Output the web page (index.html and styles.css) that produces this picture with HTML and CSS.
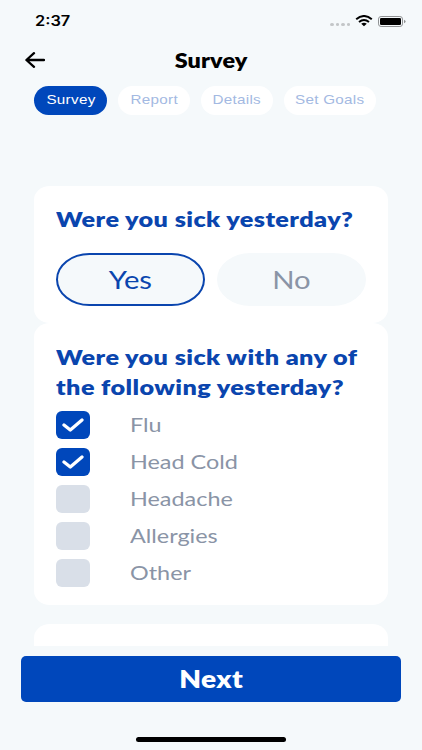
FILE: index.html
```
<!DOCTYPE html>
<html lang="en">
<head>
  <meta charset="utf-8">
  <title>Survey</title>
  <link rel="stylesheet" href="styles.css">
</head>
<body>

<div class="status-bar">
  <span class="time">2:37</span>
  <div class="status-icons">
    <div class="dots"><i></i><i></i><i></i><i></i></div>
    <svg class="wifi" width="18" height="12" viewBox="0 0 18 12">
      <path d="M1.2 4.2 Q9 -2.2 16.8 4.2" fill="none" stroke="#000" stroke-width="2"/>
      <path d="M4 7 Q9 2.8 14 7" fill="none" stroke="#000" stroke-width="1.9"/>
      <path d="M6.2 8.8 Q9 6.8 11.8 8.8 L9 11.2 Z"/>
    </svg>
    <svg class="battery" width="28" height="11" viewBox="0 0 28 11">
      <rect x="0.5" y="0.5" width="24" height="10" rx="2.6" fill="none" stroke="#8f9193"/>
      <rect x="2" y="2" width="21" height="7" rx="1.3"/>
      <path d="M26 3.8 Q27.6 4.4 27.6 5.5 Q27.6 6.6 26 7.2 Z" fill="#8f9193"/>
    </svg>
  </div>
</div>

<header class="header">
  <svg class="back" width="20" height="16" viewBox="0 0 20 16">
    <path d="M19 8 H1.6 M9 1.2 L1.4 8 L9 14.8" fill="none" stroke="#000" stroke-width="2.3" stroke-linejoin="round" stroke-linecap="round"/>
  </svg>
  <h1><span>Survey</span></h1>
</header>

<nav class="tabs">
  <a class="tab tab-survey active"><span>Survey</span></a>
  <a class="tab tab-report"><span>Report</span></a>
  <a class="tab tab-details"><span>Details</span></a>
  <a class="tab tab-goals"><span>Set Goals</span></a>
</nav>

<main class="questions">
  <section class="card card-sick">
    <h2><span>Were you sick yesterday?</span></h2>
    <div class="answers">
      <button class="answer selected"><span>Yes</span></button>
      <button class="answer"><span>No</span></button>
    </div>
  </section>

  <section class="card card-symptoms">
    <h2><span>Were you sick with any of<br>the following yesterday?</span></h2>
    <ul class="options">
      <li><i class="box checked"><svg width="22" height="14" viewBox="0 0 22 14"><path d="M2 7 L8.3 12 L20 2" fill="none" stroke="#fff" stroke-width="3.3" stroke-linecap="round" stroke-linejoin="round"/></svg></i><span>Flu</span></li>
      <li><i class="box checked"><svg width="22" height="14" viewBox="0 0 22 14"><path d="M2 7 L8.3 12 L20 2" fill="none" stroke="#fff" stroke-width="3.3" stroke-linecap="round" stroke-linejoin="round"/></svg></i><span>Head Cold</span></li>
      <li><i class="box"></i><span>Headache</span></li>
      <li><i class="box"></i><span>Allergies</span></li>
      <li><i class="box"></i><span>Other</span></li>
    </ul>
  </section>

  <section class="card card-next"></section>
</main>

<button class="next"><span>Next</span></button>
<div class="home-indicator"></div>

</body>
</html>
```

FILE: styles.css
```
* {
  box-sizing: border-box;
}

body {
  margin: 0;
  height: 750px;
  overflow: hidden;
  background-color: #f5f9fb;
  font-family: Lato, sans-serif;
  display: flex;
  flex-direction: column;
}

h1, h2, ul {
  margin: 0;
  padding: 0;
}

button {
  border: 0;
  padding: 0;
  font-family: inherit;
}

/* the lettering is wider than Lato, so labels are stretched sideways */
h1 span, h2 span, button span, li span, .tab span, .time {
  display: inline-block;
  white-space: nowrap;
  transform: scaleX(1.17);
}

.status-bar {
  height: 42px;
  padding: 0 16px 0 35px;
  display: flex;
  justify-content: space-between;
  align-items: center;
}

.time {
  font: 600 14px/20px Inter, sans-serif;
  transform-origin: left;
}

.status-icons {
  display: flex;
  align-items: center;
}

.dots {
  display: flex;
  gap: 2px;
  padding-top: 7px;
  margin-right: 5px;
}

.dots i {
  width: 3.5px;
  height: 3px;
  border-radius: 50%;
  background-color: #c3c6c8;
}

.wifi {
  margin-right: 5px;
}

.header {
  height: 36px;
  padding: 0 25px;
  display: grid;
  grid-template-columns: 20px 1fr 20px;
  align-items: center;
}

.back {
  margin-top: -1px;
}

h1 {
  font-size: 20px;
  line-height: 24px;
  font-weight: 800;
  letter-spacing: 0.1px;
  text-align: center;
}

.tabs {
  margin-top: 7.5px;
  padding-left: 34px;
  display: flex;
  gap: 11px;
}

.tab {
  width: 72px;
  height: 29px;
  border-radius: 15px;
  background-color: #fff;
  color: #a3b9e2;
  font: 13px/27px "Liberation Sans", sans-serif;
  letter-spacing: 0.25px;
  text-align: center;
}

.tab-survey {
  width: 73px;
}

.tab-goals {
  width: 92px;
}

.tab.active {
  background-color: #0047bb;
  color: #fff;
}

.questions {
  height: 460px;
  margin-top: 71.5px;
  padding: 0 34px;
  overflow: hidden;
}

.card {
  background-color: #fff;
  border-radius: 16px/14px;
  padding: 18px 22px 0;
}

.card-sick {
  height: 137px;
}

.card-symptoms {
  height: 282px;
  padding-top: 19px;
}

.card-next {
  height: 60px;
  margin-top: 19px;
}

h2 {
  color: #0a45ae;
  font-size: 21px;
  line-height: 29.5px;
  font-weight: 800;
  letter-spacing: 0.35px;
}

h2 span, li span {
  transform-origin: left;
}

h2 span {
  transform: scaleX(1.2);
}

.answers {
  display: flex;
  gap: 12px;
  margin-top: 19px;
}

.answer {
  width: 149px;
  height: 53px;
  padding-bottom: 1px;
  border-radius: 34px/27px;
  background-color: #f5f9fb;
  color: #8a94a6;
  font-size: 25px;
}

.answer.selected {
  border: 2px solid #0a45ae;
  color: #0a45ae;
}

.options {
  list-style: none;
  margin-top: 9.5px;
  display: grid;
  gap: 9px;
}

.options li {
  display: flex;
  align-items: center;
  height: 28px;
  color: #8a94a6;
  font-size: 20px;
}

.options span {
  margin-top: -2px;
}

.box {
  width: 34px;
  height: 28px;
  margin-right: 40px;
  border-radius: 6px;
  background-color: #d9dfe8;
  display: flex;
  align-items: center;
  justify-content: center;
}

.box.checked {
  background-color: #0047bb;
}

.next {
  width: 380px;
  height: 46px;
  margin: 9.5px 0 0 21px;
  flex: none;
  border-radius: 5px;
  background-color: #0047bb;
  color: #fff;
  font-size: 24px;
  font-weight: 800;
  letter-spacing: 0.3px;
}

.home-indicator {
  width: 150px;
  height: 5px;
  margin: 35.5px auto 0;
  border-radius: 3px;
  background-color: #000;
}
```
